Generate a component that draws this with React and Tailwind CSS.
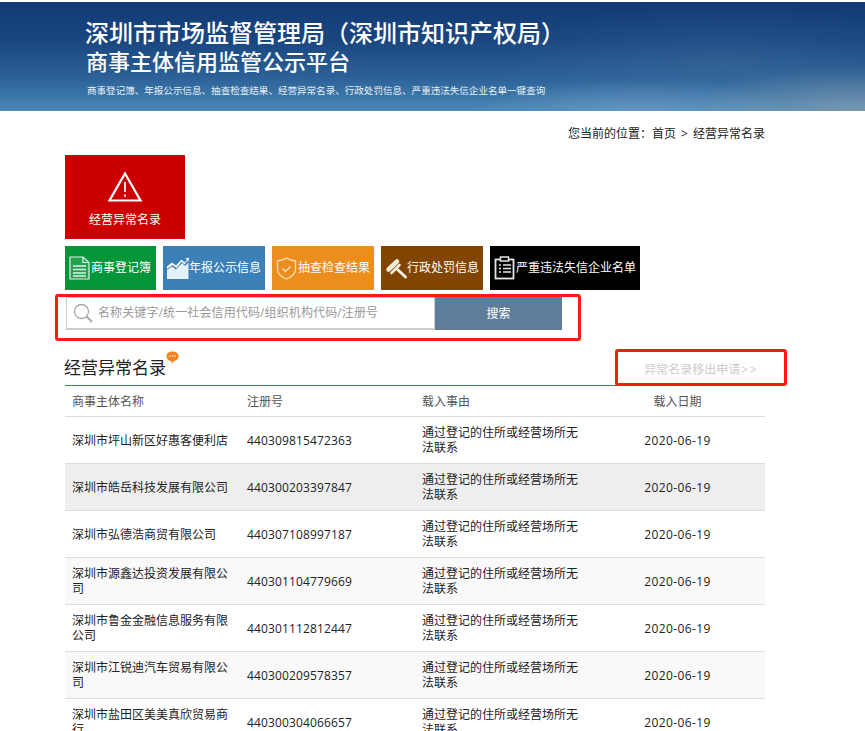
const rows = [
  ["深圳市坪山新区好惠客便利店", "440309815472363", "bg-white"],
  ["深圳市皓岳科技发展有限公司", "440300203397847", "bg-[#eeeeee]"],
  ["深圳市弘德浩商贸有限公司", "440307108997187", "bg-white"],
  ["深圳市源鑫达投资发展有限公司", "440301104779669", "bg-[#f9f9f9]"],
  ["深圳市鲁金金融信息服务有限公司", "440301112812447", "bg-white"],
  ["深圳市江锐迪汽车贸易有限公司", "440300209578357", "bg-[#f9f9f9]"],
  ["深圳市盐田区美美真欣贸易商行", "440300304066657", "bg-white"],
];

function DocIcon() {
  return (
    <svg width="21" height="24" viewBox="0 0 21 24" fill="none" stroke="#dff0e4" strokeWidth="1.2">
      <path d="M1 1h13l6 5.500V23H1z" fill="rgba(255,255,255,0.12)" />
      <path d="M14 1v5.500h6" />
      <path d="M4 10h13M4 13.500h13M4 17h13M4 20h13" strokeWidth="1.700" />
    </svg>
  );
}
function ChartIcon() {
  return (
    <svg width="22" height="22" viewBox="0 0 22 22" fill="#e6f0f7">
      <path d="M0 22V13l5-3.500 4 3 6-6.500 3 3 3.500-3.500V22z" />
      <path d="M0 9.500 5 5.500l4 3 5.500-6 3 3L20 3l-1.500-1.500L22 .5l-.5 4L20 4l-2.500 3.500-3-3L9.500 11l-4-3L0 12z" fill="#ffffff" />
    </svg>
  );
}
function ShieldIcon() {
  return (
    <svg width="21" height="23" viewBox="0 0 21 23" fill="none" stroke="#f8e2bd" strokeWidth="1.300">
      <path d="M10.500 1c2.500 1.700 5.500 2.600 9 2.800v8.200c0 4.500-4 8-9 10-5-2-9-5.500-9-10V3.800C5 3.600 8 2.700 10.500 1z" />
      <path d="M6.500 11.500l3 3 5-5" strokeWidth="1.500" />
    </svg>
  );
}
function GavelIcon() {
  return (
    <svg width="22" height="21" viewBox="0 0 22 21" fill="none" stroke="#f7eddd" strokeLinecap="round">
      <path d="M3.500 11.500 12 3.500" strokeWidth="4.500" />
      <path d="M6.500 15 14.500 7" strokeWidth="2.500" />
      <path d="M12.500 11.500 20.500 19" strokeWidth="3" />
    </svg>
  );
}
function ClipIcon() {
  return (
    <svg width="21" height="24" viewBox="0 0 21 24" fill="none" stroke="#e5e5e5">
      <rect x="1.500" y="3.500" width="18" height="19" strokeWidth="1.800" />
      <rect x="6.500" y="1" width="8" height="4" strokeWidth="1.500" fill="#000000" />
      <path d="M5 9h2M9 9h8M5 12.500h2M9 12.500h8M5 16h2M9 16h8" strokeWidth="1.600" />
    </svg>
  );
}
function Warn() {
  return (
    <svg width="36" height="32" viewBox="0 0 36 32" fill="none" stroke="#ffffff">
      <path d="M18 2.500 33.500 29.500H2.500z" strokeWidth="2.200" />
      <path d="M18 11v10" strokeWidth="1.800" />
      <path d="M18 23.500v2.200" strokeWidth="1.800" />
    </svg>
  );
}

function Nav({ w, bg, icon, text }) {
  return (
    <div className={`${w} ${bg} h-[44px] flex items-center pl-[4px] text-white text-[12px] whitespace-nowrap`}>
      <div className="w-[22px] flex justify-start">{icon}</div>
      <span>{text}</span>
    </div>
  );
}

export default function App() {
  return (
    <div className="h-screen overflow-hidden bg-white pt-[2px] text-[12px] text-[#222222] font-['Open_Sans','Noto_Sans_CJK_SC',sans-serif]">
      <div className="h-[109px] pl-[85px] pt-[14px] text-white bg-[radial-gradient(ellipse_170px_50px_at_860px_112px,rgba(170,170,170,0.5),transparent),radial-gradient(ellipse_170px_34px_at_640px_112px,rgba(130,170,205,0.5),transparent),radial-gradient(ellipse_220px_60px_at_720px_60px,rgba(90,130,170,0.22),transparent),linear-gradient(180deg,#123a73_0%,#1a4680_35%,#2c6298_70%,#4a88b6_100%)]">
        <div className="text-[24px] leading-[32px] font-medium whitespace-nowrap font-['Noto_Sans_CJK_SC',sans-serif]">深圳市市场监督管理局（深圳市知识产权局）</div>
        <div className="text-[22px] leading-[24px] font-medium pl-[1px] font-['Noto_Sans_CJK_SC',sans-serif]">商事主体信用监管公示平台</div>
        <div className="text-[9.56px] leading-[14px] mt-[12px] pl-[2px] whitespace-nowrap text-[#e8eff6]">商事登记簿、年报公示信息、抽查检查结果、经营异常名录、行政处罚信息、严重违法失信企业名单一键查询</div>
      </div>

      <div className="ml-[65px] w-[700px]">
        <div className="h-[44px] flex items-center justify-end pt-[1px] text-[#222222] whitespace-nowrap">您当前的位置：首页<span className="mx-[5px]">&gt;</span>经营异常名录</div>

        <div className="w-[120px] h-[84px] bg-[#cc0000] flex flex-col items-center pt-[16px] text-white">
          <Warn />
          <div className="mt-[8px] leading-[18px]">经营异常名录</div>
        </div>

        <div className="mt-[7px] flex gap-[7px]">
          <Nav w="w-[91px]" bg="bg-[#05963a]" icon={<DocIcon />} text="商事登记簿" />
          <Nav w="w-[102px]" bg="bg-[#3b80b6]" icon={<ChartIcon />} text="年报公示信息" />
          <Nav w="w-[102px]" bg="bg-[#ec8e1e]" icon={<ShieldIcon />} text="抽查检查结果" />
          <Nav w="w-[102px]" bg="bg-[#824500]" icon={<GavelIcon />} text="行政处罚信息" />
          <Nav w="w-[150px]" bg="bg-black" icon={<ClipIcon />} text="严重违法失信企业名单" />
        </div>

        <div className="relative mt-[7px] ml-[1px] flex w-[496px] h-[33px]">
          <div className="flex-1 flex items-center border border-[#cccccc] border-b-2 pl-[6px] gap-[5px] text-[#999999] text-[12px] tracking-[0.12px] whitespace-nowrap overflow-hidden">
            <svg width="20" height="20" viewBox="0 0 20 20" fill="none" stroke="#aaaaaa" className="shrink-0">
              <circle cx="8.500" cy="8.500" r="7" strokeWidth="1.300" />
              <path d="M13.500 13.500 19 19" strokeWidth="2" />
            </svg>
            <span>名称关键字/统一社会信用代码/组织机构代码/注册号</span>
          </div>
          <div className="w-[127px] shrink-0 bg-[#5f7d9b] text-white flex items-center justify-center">搜索</div>
          <div className="absolute left-[-11px] top-[-3px] w-[526px] h-[47px] border-[3px] border-[#ff1a0f] rounded-[3px]"></div>
        </div>

        <div className="relative mt-[13px] h-[43px] border-b border-[#3d71c0] flex items-end justify-between">
          <div className="relative text-[17px] leading-[24px] mb-[5px] -ml-[1px] text-[#222222]">
            经营异常名录
            <svg width="13" height="13" viewBox="0 0 13 13" className="absolute left-[102px] top-[-5px]">
              <path d="M6.500 0.500C10 0.500 12.500 2.500 12.500 5.200 12.500 8 10 9.800 8 10L6.500 12.500 5 10C3 9.800 .5 8 .5 5.200.5 2.500 3 .5 6.500.5z" fill="#f5821f" />
              <circle cx="4" cy="5" r="0.800" fill="#fff" />
              <circle cx="6.500" cy="5" r="0.800" fill="#fff" />
              <circle cx="9" cy="5" r="0.800" fill="#fff" />
            </svg>
          </div>
          <div className="mr-[7px] mb-[7px] text-[#cccccc] leading-[16px]">异常名录移出申请<span className="tracking-[1.500px] ml-[1px]">&gt;&gt;</span></div>
          <div className="absolute left-[550px] top-[6px] w-[172px] h-[37px] border-[3px] border-[#ff1a0f] rounded-[3px]"></div>
        </div>

        <div className="grid grid-cols-4 h-[31px] pt-[1px] items-center border-b border-[#dddddd] text-[#555555]">
          <div className="pl-[7px]">商事主体名称</div>
          <div className="pl-[7px]">注册号</div>
          <div className="pl-[7px]">载入事由</div>
          <div className="text-center">载入日期</div>
        </div>

        {rows.map((r) => (
          <div key={r[1]} className={`grid grid-cols-4 h-[47px] items-center border-b border-[#dddddd] leading-[15px] ${r[2]}`}>
            <div className="px-[7px]">{r[0]}</div>
            <div className="px-[7px] tracking-[0.14px]">{r[1]}</div>
            <div className="px-[7px]">通过登记的住所或经营场所无法联系</div>
            <div className="text-center tracking-[0.4px]">2020-06-19</div>
          </div>
        ))}
      </div>
    </div>
  );
}
